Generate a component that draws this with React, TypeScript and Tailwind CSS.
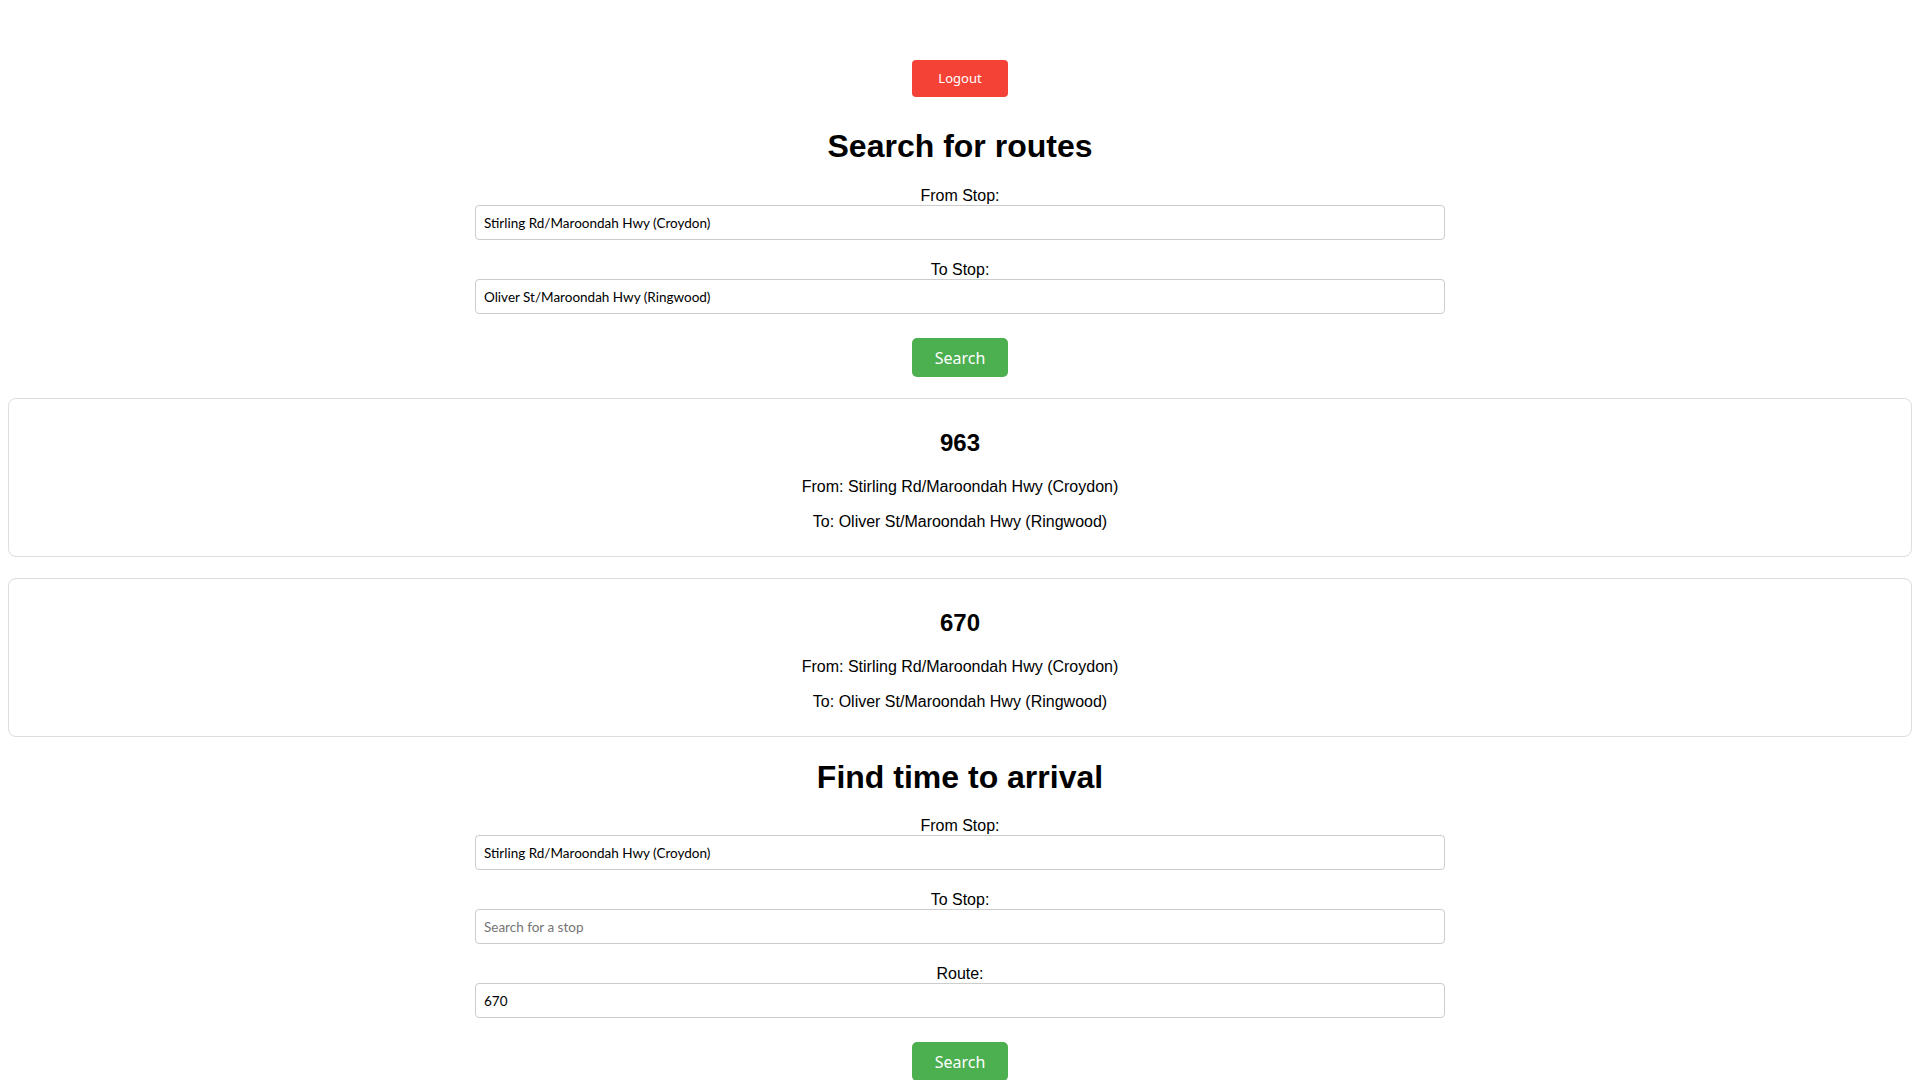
import React from "react";

const stop1 = "Stirling Rd/Maroondah Hwy (Croydon)";
const stop2 = "Oliver St/Maroondah Hwy (Ringwood)";

function Field({
  label,
  value,
  placeholder,
  className = "",
}: {
  label: string;
  value?: string;
  placeholder?: string;
  className?: string;
}) {
  return (
    <div className={`flex flex-col items-center ${className}`}>
      <label className="pt-[1px] text-[16px] leading-[18px] text-black font-['Liberation_Sans',Arial,sans-serif]">
        {label}
      </label>
      <input
        readOnly
        defaultValue={value}
        placeholder={placeholder}
        className="h-[35px] w-[970px] rounded-[4px] border border-[#cccccc] bg-white px-[8px] text-[13.5px] text-black placeholder:text-[#757575] outline-none font-['Lato',sans-serif]"
      />
    </div>
  );
}

function SearchButton({ className = "" }: { className?: string }) {
  return (
    <button className={`h-[39px] w-[96px] rounded-[5px] bg-[#4caf50] text-[16px] text-white font-['Noto_Sans',sans-serif] ${className}`}>
      Search
    </button>
  );
}

function RouteCard({ route, className = "" }: { route: string; className?: string }) {
  return (
    <div
      className={`mx-2 flex h-[159px] flex-col items-center rounded-lg border border-[#dddddd] pt-[30px] text-black font-['Liberation_Sans',Arial,sans-serif] ${className}`}
    >
      <h3 className="text-[24px] font-bold leading-[28px]">{route}</h3>
      <p className="mt-[21px] text-[16px] leading-[18px]">From: {stop1}</p>
      <p className="mt-[17px] text-[16px] leading-[18px]">To: {stop2}</p>
    </div>
  );
}

export default function App() {
  return (
    <div className="min-h-screen bg-white pb-8 flex flex-col items-stretch">
      <div className="flex justify-center pt-[60px]">
        <button className="h-[37px] w-[96px] rounded-[4px] bg-[#f44336] pt-[1px] text-[13px] text-white font-['Noto_Sans',sans-serif]">
          Logout
        </button>
      </div>

      <h1 className="mt-[31px] text-center text-[32px] font-bold leading-[37px] text-black font-['Liberation_Sans',Arial,sans-serif]">
        Search for routes
      </h1>
      <Field className="mt-[21px]" label="From Stop:" value={stop1} />
      <Field className="mt-[20px]" label="To Stop:" value={stop2} />
      <div className="flex justify-center mt-[24px]">
        <SearchButton />
      </div>

      <RouteCard className="mt-[21px]" route="963" />
      <RouteCard className="mt-[21px]" route="670" />

      <h1 className="mt-[22px] text-center text-[32px] font-bold leading-[37px] text-black font-['Liberation_Sans',Arial,sans-serif]">
        Find time to arrival
      </h1>
      <Field className="mt-[20px]" label="From Stop:" value={stop1} />
      <Field className="mt-[20px]" label="To Stop:" placeholder="Search for a stop" />
      <Field className="mt-[20px]" label="Route:" value="670" />
      <div className="flex justify-center mt-[24px]">
        <SearchButton />
      </div>
    </div>
  );
}
